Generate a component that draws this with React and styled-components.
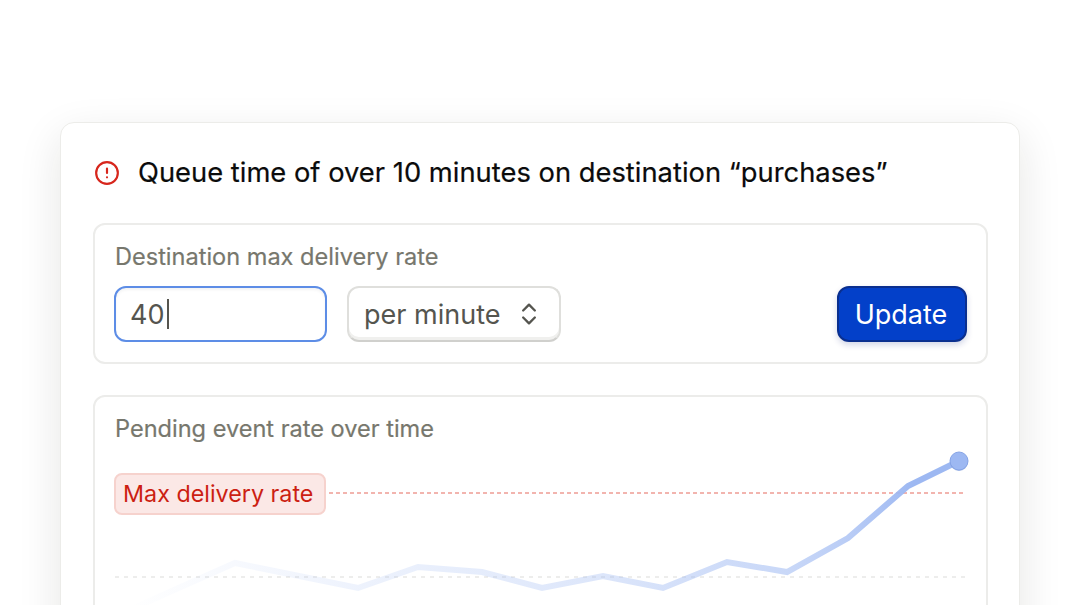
import React from "react";
import styled, { createGlobalStyle } from "styled-components";
import { CircleAlert, ChevronsUpDown } from "lucide-react";

const GlobalStyle = createGlobalStyle`
  html, body {
    margin: 0;
    height: 605px;
    overflow: hidden;
    background: #fff;
    font-family: Inter, "Liberation Sans", sans-serif;
  }
`;

const Page = styled.div`
  height: 605px;
  padding: 122px 60px 0;
  box-sizing: border-box;
  overflow: hidden;
`;

const Card = styled.div`
  height: 560px;
  box-sizing: border-box;
  padding: 32px 31px 0 32px;
  background: #fff;
  border: 1px solid #ecece9;
  border-radius: 14px;
  box-shadow: 0 14px 44px rgba(30, 30, 20, 0.11);
`;

const Heading = styled.div`
  display: flex;
  align-items: center;
  gap: 18px;
  height: 36px;
  margin-bottom: 32px;
  padding-left: 1px;
  font-size: 27.35px;
  line-height: 36px;
  color: #0b0b0b;
  -webkit-text-stroke: 0.2px #0b0b0b;
  white-space: nowrap;

  svg {
    color: #d7261c;
    flex: none;
  }
`;

const Panel = styled.section`
  border: 2px solid #ececea;
  border-radius: 12px;
  padding: 17px 19px 20px;
  margin-bottom: 31px;
  background: #fff;
`;

const Label = styled.div`
  padding-left: 1px;
  font-size: 23.55px;
  line-height: 30px;
  color: #77776d;
  -webkit-text-stroke: 0.2px #77776d;
`;

const Controls = styled.div`
  display: flex;
  align-items: center;
  gap: 20px;
  margin-top: 14px;
`;

const Input = styled.div`
  width: 213px;
  height: 56px;
  box-sizing: border-box;
  display: flex;
  align-items: center;
  padding-left: 14px;
  border: 2px solid #5d8de6;
  border-radius: 12px;
  font-size: 27px;
  color: #55554f;
  box-shadow: inset 0 2px 3px rgba(0, 0, 0, 0.05);
`;

const Caret = styled.span`
  width: 2px;
  height: 30px;
  margin-left: 3px;
  background: #55554f;
`;

const Select = styled.div`
  width: 214px;
  height: 56px;
  box-sizing: border-box;
  display: flex;
  align-items: center;
  justify-content: space-between;
  padding: 0 16px 0 15px;
  border: 2px solid #dfdfdc;
  border-bottom-color: #d0d0cd;
  border-radius: 12px;
  font-size: 27px;
  color: #55554f;
  box-shadow: inset 0 -3px 0 #f0f0ee;
`;

const Button = styled.button`
  width: 130px;
  height: 56px;
  margin-left: auto;
  padding: 0 2px 0 0;
  border: 2px solid #0a2f8f;
  border-radius: 12px;
  background: #0340c9;
  color: #fff;
  font-family: inherit;
  font-size: 27px;
  box-shadow: 0 3px 6px rgba(0, 30, 120, 0.18);
`;

const Chart = styled.div`
  position: relative;
  height: 200px;
  margin-top: 6px;
`;

const Tag = styled.span`
  position: absolute;
  left: 0;
  top: 23px;
  width: 212px;
  height: 42px;
  box-sizing: border-box;
  display: flex;
  align-items: center;
  padding: 0 0 2px 7px;
  background: #fbe8e6;
  border: 2px solid #f6d2cd;
  border-radius: 8px;
  color: #cc1f12;
  font-size: 23.3px;
  white-space: nowrap;
`;

const points =
  "0,617 60,590 121,563 244,588 304,567 368,572 428,588 489,576 549,588 613,562 673,572 734,538 794,486 845,461";

const RateChart = () => (
  <svg width="853" height="200" viewBox="0 0 853 200" style={{ overflow: "visible", display: "block" }}>
    <defs>
      <linearGradient id="fade" gradientUnits="userSpaceOnUse" x1="10" y1="0" x2="800" y2="0">
        <stop offset="0" stopColor="#9db8f2" stopOpacity="0" />
        <stop offset="0.37" stopColor="#9db8f2" stopOpacity="0.22" />
        <stop offset="0.6" stopColor="#9db8f2" stopOpacity="0.35" />
        <stop offset="0.76" stopColor="#9db8f2" stopOpacity="0.5" />
        <stop offset="0.84" stopColor="#9db8f2" stopOpacity="0.55" />
        <stop offset="0.92" stopColor="#9db8f2" stopOpacity="0.72" />
        <stop offset="1" stopColor="#9db8f2" />
      </linearGradient>
    </defs>
    <g transform="translate(0,-450)">
      <line x1="1" y1="577" x2="851" y2="577" stroke="#e8e8e6" strokeWidth="1.5" strokeDasharray="4 5" />
      <line x1="215" y1="493" x2="851" y2="493" stroke="#ee9c94" strokeWidth="1.5" strokeDasharray="4 3" />
      <polyline points={points} fill="none" stroke="url(#fade)" strokeWidth="6" />
      <circle cx="845" cy="462" r="9" fill="#6f8fd6" opacity="0.55" />
      <circle cx="845" cy="461" r="9" fill="#9db8f2" stroke="#86a4e6" strokeWidth="1" />
    </g>
  </svg>
);

export default function App() {
  return (
    <Page>
      <GlobalStyle />
      <Card>
        <Heading>
          <CircleAlert size={26} strokeWidth={2} />
          Queue time of over 10 minutes on destination “purchases”
        </Heading>
        <Panel>
          <Label>Destination max delivery rate</Label>
          <Controls>
            <Input>
              40
              <Caret />
            </Input>
            <Select>
              per minute
              <ChevronsUpDown size={28} strokeWidth={2} />
            </Select>
            <Button>Update</Button>
          </Controls>
        </Panel>
        <Panel>
          <Label>Pending event rate over time</Label>
          <Chart>
            <RateChart />
            <Tag>Max delivery rate</Tag>
          </Chart>
        </Panel>
      </Card>
    </Page>
  );
}
